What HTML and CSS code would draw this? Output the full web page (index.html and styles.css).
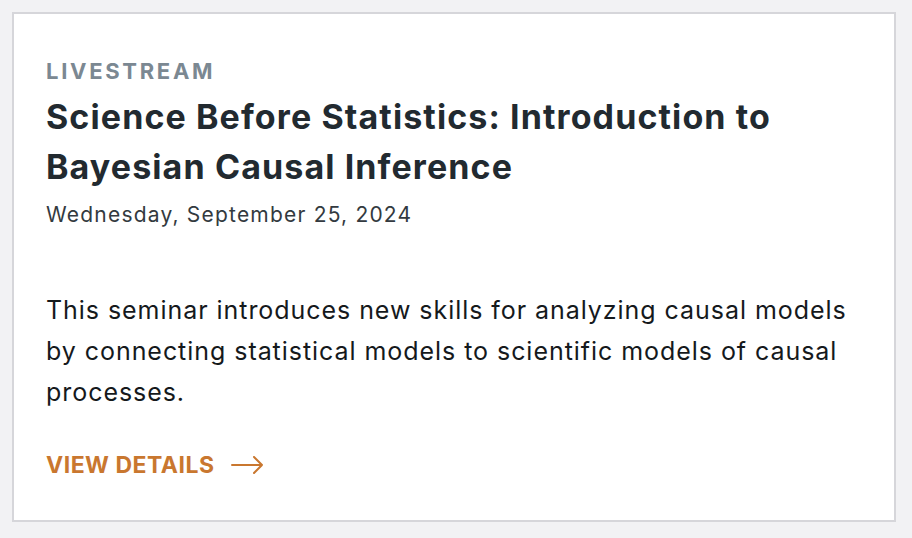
FILE: index.html
```html
<!DOCTYPE html>
<html lang="en">

<head>
    <meta charset="UTF-8">
    <meta name="viewport" content="width=device-width, initial-scale=1.0">
    <title>Science Before Statistics</title>
    <link rel="stylesheet" href="styles.css">
</head>

<body>
    <!-- event card -->
    <div class="event-card">
        <div class="event-type">LIVESTREAM</div>
        <h2 class="event-title">Science Before Statistics: Introduction to Bayesian Causal Inference</h2>
        <div class="event-date">Wednesday, September 25, 2024</div>
        <p class="event-summary">This seminar introduces new skills for analyzing causal models by connecting statistical models to scientific models of causal processes.</p>
        <a class="event-link" href="#">
            VIEW DETAILS
            <svg class="arrow" width="33" height="18" viewBox="0 0 33 18" fill="none" stroke="currentColor" stroke-width="2" stroke-linecap="round" stroke-linejoin="round">
                <path d="M1 9H31M23 1L31 9L23 17" />
            </svg>
        </a>
    </div>
</body>

</html>
```

FILE: styles.css
```css
/* page */
body {
    margin: 0;
    padding: 12px 16px 16px 12px;
    background-color: #f2f2f4;
    font-family: Inter, "Noto Sans", Arial, sans-serif;
}

/* card */
.event-card {
    background: #fff;
    border: 2px solid #d6d6da;
    padding: 42px 32px 40px 32px;
    height: 424px;
}

.event-type {
    font-size: 22px;
    font-weight: 700;
    letter-spacing: 2.7px;
    color: #7b8892;
    line-height: 30px;
}

.event-title {
    margin: 6px 0 0 0;
    font-size: 34px;
    font-weight: 700;
    line-height: 50px;
    color: #222a30;
    letter-spacing: 1.1px;
}

.event-date {
    margin-top: 8px;
    font-size: 21px;
    color: #333a40;
    line-height: 30px;
    letter-spacing: 1.2px;
}

.event-summary {
    margin: 60px 0 0 0;
    font-size: 25px;
    line-height: 41px;
    color: #15191c;
    letter-spacing: 0.95px;
    max-width: 820px;
}

.event-link {
    display: inline-flex;
    align-items: center;
    gap: 16px;
    margin-top: 38px;
    font-size: 23px;
    font-weight: 700;
    color: #c9772f;
    letter-spacing: 0.5px;
    text-decoration: none;
}
```
